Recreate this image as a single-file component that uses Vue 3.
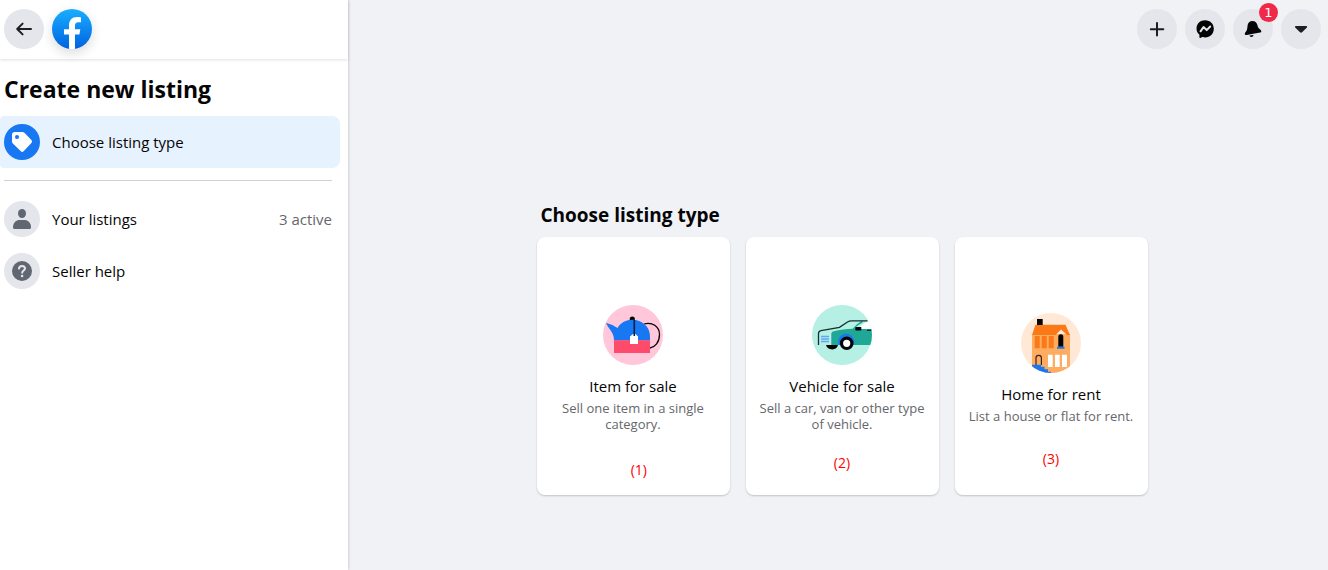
<script setup>
const listingTypes = [
  { id: 'item', title: 'Item for sale', text: 'Sell one item in a single category.', note: '(1)' },
  { id: 'vehicle', title: 'Vehicle for sale', text: 'Sell a car, van or other type of vehicle.', note: '(2)' },
  { id: 'home', title: 'Home for rent', text: 'List a house or flat for rent.', note: '(3)' }
]
</script>

<template>
  <div class="page">
    <aside class="sidebar">
      <header class="brand-bar">
        <button class="round" type="button" aria-label="Back">
          <svg width="20" height="20" viewBox="0 0 20 20" fill="none" stroke="#1c1e21" stroke-width="2" stroke-linecap="round" stroke-linejoin="round">
            <path d="M17 10H3.200M8.600 4.600 3.200 10l5.400 5.400" />
          </svg>
        </button>
        <a class="logo" href="#" aria-label="Facebook">
          <svg width="40" height="40" viewBox="0 0 40 40">
            <defs>
              <linearGradient id="brand" x1="0" y1="0" x2="0" y2="1">
                <stop offset="0" stop-color="#19aeff" />
                <stop offset="1" stop-color="#0062e0" />
              </linearGradient>
            </defs>
            <circle cx="20" cy="20" r="20" fill="url(#brand)" />
            <path fill="#fff" d="M17 39.800V25.600h-5v-5.400h5v-3.600C17 11 20 8 25 8c1.600 0 3.100.2 4 .4v4.800h-2.600c-2.500 0-3.400 1.300-3.400 3.400v3.600h5.300l-.9 5.400H23v14.200a20 20 0 0 1-6 0z" />
          </svg>
        </a>
      </header>

      <h1>Create new listing</h1>
      <nav class="menu">
        <a class="entry current" href="#" aria-current="page">
          <span class="badge blue">
            <svg width="20" height="20" viewBox="0 0 20 20">
              <path fill="#fff" fill-rule="evenodd" d="M2.600 0h7.800c.8 0 1.500.3 2 .8l7 7.300c.8.8.8 2 0 2.800l-7.800 8.400c-.8.8-2 .8-2.700 0L.8 11.600c-.5-.5-.8-1.200-.8-2V2.600C0 1.200 1.200 0 2.600 0zM5 3a2 2 0 1 0 0 4 2 2 0 0 0 0-4z" />
            </svg>
          </span>
          <span class="label">Choose listing type</span>
        </a>
        <hr />
        <a class="entry" href="#">
          <span class="badge">
            <svg width="20" height="22" viewBox="0 0 20 22" fill="#606770">
              <ellipse cx="10" cy="5.500" rx="4" ry="4.500" />
              <path d="M1 19.500C1 14.500 4 12 8 12h4c4 0 7 2.500 7 7.500 0 .9-.6 1.500-1.500 1.500h-15C1.600 21 1 20.400 1 19.500z" />
            </svg>
          </span>
          <span class="label">Your listings</span>
          <span class="count">3 active</span>
        </a>
        <a class="entry" href="#">
          <span class="badge">
            <svg width="20" height="20" viewBox="0 0 20 20">
              <circle cx="10" cy="10" r="10" fill="#606770" />
              <path d="M7 7.600C7.100 5.800 8.300 4.900 10 4.900s3 .9 3 2.500c0 2.100-2.800 2.200-2.800 4.300" fill="none" stroke="#e4e6eb" stroke-width="2" stroke-linecap="round" />
              <circle cx="10.100" cy="15" r="1.300" fill="#e4e6eb" />
            </svg>
          </span>
          <span class="label">Seller help</span>
        </a>
      </nav>
    </aside>

    <div class="content">
      <div class="actions">
        <button class="round" type="button" aria-label="Create">
          <svg width="20" height="20" viewBox="0 0 20 20" stroke="#1c1e21" stroke-width="2" stroke-linecap="round">
            <path d="M10 4v12.500M3.800 10.200h12.500" />
          </svg>
        </button>
        <button class="round" type="button" aria-label="Messenger">
          <svg width="20" height="20" viewBox="0 0 20 20">
            <path fill="#050505" d="M10.200 1.200c-4.900 0-8.700 3.500-8.700 8.300 0 2.500 1 4.600 2.700 6.100.2.200.2.300.2.600v2c0 .7.400.9 1 .7l1.800-.8c.2-.1.400-.1.600 0 .8.200 1.600.3 2.400.3 4.900 0 8.600-3.800 8.600-8.700 0-5-3.700-8.500-8.600-8.500z" />
            <path d="m5.500 12.300 3-4.200 3.200 3 3.500-3.600" fill="none" stroke="#e4e6eb" stroke-width="2" stroke-linejoin="round" stroke-linecap="round" />
          </svg>
        </button>
        <button class="round" type="button" aria-label="Notifications">
          <svg width="20" height="20" viewBox="0 0 20 20" fill="#050505">
            <path d="M4.500 7C4.800 3.800 6.800 2 9.400 2c2.600 0 4.300 1.300 4.900 3.800.4 1.700.8 2.900 2 4 1.200 1 2 1.700 2 2.600 0 .6-.5.900-1.200 1L3.700 16c-1 .2-1.900-.2-1.900-1 0-.9.700-1.600 1.500-2.900C4.300 10.500 4.300 9 4.500 7z" />
            <path d="m6.500 16.500 4-.6c0 1-.7 1.900-1.900 2-1 .2-1.900-.4-2.100-1.400z" />
          </svg>
          <span class="alert">1</span>
        </button>
        <button class="round" type="button" aria-label="Account">
          <svg width="20" height="20" viewBox="0 0 20 20" fill="#1c1e21">
            <path d="M4.800 7h10.500c.8 0 1.100.9.600 1.400l-4.800 4.900c-.6.600-1.500.6-2.100 0L4.200 8.400C3.700 7.900 4 7 4.800 7z" />
          </svg>
        </button>
      </div>

      <main class="chooser">
        <h2>Choose listing type</h2>
        <div class="cards">
          <button v-for="type in listingTypes" :key="type.id" class="card" :class="type.id" type="button">
            <svg v-if="type.id === 'item'" width="60" height="60" viewBox="0 0 60 60">
              <circle cx="30" cy="30" r="30" fill="#ffc7d9" />
              <path d="M41 19c8-2.500 15.500 2.500 15.500 10.500S52 42 47 43" fill="none" stroke="#050505" stroke-width="1.300" />
              <circle cx="29.300" cy="14" r="2.600" fill="#050505" />
              <path fill="#1877f2" d="M3 18c3 .3 8.500 3 11.500 5C18 17.500 23 14.800 29.300 14.800 39 14.800 47 22 47 31v4.500H11C11 27 6.500 25.500 3 18z" />
              <path fill="#ff4b6b" d="M11 35.300h36V48H11z" />
              <path fill="#fff" d="m30 29-3 2.500V39h8v-7.500L32.500 29z" />
              <path d="M31.300 15v16" stroke="#0b1f45" stroke-width="1.600" />
            </svg>
            <svg v-else-if="type.id === 'vehicle'" width="60" height="60" viewBox="0 0 60 60">
              <clipPath id="vehicle-clip"><circle cx="30" cy="30" r="30" /></clipPath>
              <circle cx="30" cy="30" r="30" fill="#b6efe4" />
              <g clip-path="url(#vehicle-clip)">
                <path fill="#fff" d="M46 25c2-4 5-6.500 9-8.200h5V25z" />
                <path fill="#20a896" d="M19.300 29c0-1.600 1-2.300 2.500-2.700 6-1.600 12-2.600 19-2.600L49 24h11v16H19.300z" />
                <path d="M41 24.500c2.500-3.500 5.500-6 9.500-8" fill="none" stroke="#20a896" stroke-width="1.400" />
                <path d="M6.500 40V28.500c0-1.700 1-2.500 2.500-2.800l18.500-3.400 8-5.300c1.500-1 2.500-1.200 4-1.200h16" fill="none" stroke="#12312e" stroke-width="1.300" />
                <path d="M9 31.500h8M9 34h8M9 36.500h8" stroke="#5fa8f5" stroke-width="1.500" />
                <path fill="#050505" d="M14 40h12c-.6 2.700-2.500 4.400-5.800 4.400S14.600 42.700 14 40zM43.500 22h5.800v3.600h-4.600c-1.400 0-1.900-.9-1.200-3.600zM55 24.800h4.500v1H55z" />
                <path fill="#1877f2" d="M26.500 40a8.200 8.200 0 1 1 15.800-3l-.5 3z" />
                <circle cx="34.700" cy="38.300" r="5.200" fill="#fff" stroke="#050505" stroke-width="3.200" />
              </g>
            </svg>
            <svg v-else width="60" height="60" viewBox="0 0 60 60">
              <clipPath id="home-clip"><circle cx="30" cy="30" r="30" /></clipPath>
              <circle cx="30" cy="30" r="30" fill="#ffe9d6" />
              <g clip-path="url(#home-clip)">
                <path fill="#ffac63" d="M11 21h38v39H11z" />
                <path fill="#fa7816" d="M14.500 11.700h30L49 22h-3l-6-5.500-5.500 5.500H11z" />
                <path fill="#050505" d="M16 6h5.700v6H16zM37.300 33.700v-10a2.500 2.500 0 0 1 5 0v10z" />
                <path fill="#fa7816" d="M13.700 23h5v12.300h-5zM20.700 23h5v12.300h-5zM27.700 23h5v12.300h-5z" />
                <path fill="#1877f2" d="M36 33.700h7.500v2H36z" />
                <path fill="#fff" d="M27 41.700h4.700V54H27zM34 41.700h4.700V54H34zM41 41.700h5V54h-5z" />
                <path d="M15 52v-7a2.700 2.700 0 0 1 5.400 0v7" fill="none" stroke="#3b2417" stroke-width="1.200" />
                <path fill="#1877f2" d="M11 51.700h9v2h3.500v2.600H27v2.400h3V61H11z" />
              </g>
            </svg>
            <span class="title">{{ type.title }}</span>
            <span class="text">{{ type.text }}</span>
            <span class="note">{{ type.note }}</span>
          </button>
        </div>
      </main>
    </div>
  </div>
</template>

<style>
body {
  margin: 0;
}
</style>

<style scoped>
.page {
  display: flex;
  min-height: 100vh;
  background: #f0f2f6;
  color: #050505;
  font-family: "Open Sans", "Noto Sans", sans-serif;
}
.page * {
  box-sizing: border-box;
}
.sidebar {
  flex: 0 0 348px;
  background: #fff;
  box-shadow: 0 0 3px rgba(0, 0, 0, 0.25);
}
.brand-bar {
  display: flex;
  gap: 8px;
  height: 59px;
  padding: 9px 4px;
  box-shadow: 0 1px 3px rgba(0, 0, 0, 0.12);
}
.round {
  position: relative;
  display: flex;
  align-items: center;
  justify-content: center;
  width: 40px;
  height: 40px;
  padding: 0;
  border: 0;
  border-radius: 50%;
  background: #e4e6eb;
  cursor: pointer;
}
.logo {
  height: 40px;
  border-radius: 50%;
  box-shadow: 0 4px 12px rgba(0, 0, 0, 0.15);
}
.logo svg {
  display: block;
}
h1 {
  margin: 14px 4px 11px;
  font-size: 23px;
  line-height: 32px;
  font-weight: 700;
}
.entry {
  display: flex;
  align-items: center;
  gap: 12px;
  height: 52px;
  margin-right: 8px;
  padding: 0 8px 0 4px;
  border-radius: 4px 8px 8px 4px;
  color: inherit;
  font-size: 15px;
  line-height: 20px;
  text-decoration: none;
}
.current {
  background: #e7f2ff;
}
.badge {
  display: flex;
  align-items: center;
  justify-content: center;
  width: 36px;
  height: 36px;
  border-radius: 50%;
  background: #e4e6eb;
}
.blue {
  background: #1877f2;
}
.label {
  flex: 1;
}
.count {
  color: #65676b;
}
hr {
  height: 1px;
  margin: 12px 16px 12px 4px;
  border: 0;
  background: #ced0d4;
}
.content {
  flex: 1;
  min-width: 0;
}
.actions {
  display: flex;
  justify-content: flex-end;
  gap: 8px;
  padding: 9px 7px;
}
.alert {
  position: absolute;
  top: -6px;
  right: -5px;
  width: 19px;
  height: 19px;
  border-radius: 50%;
  background: #f02849;
  color: #fff;
  font: 13px/19px "DejaVu Sans", sans-serif;
  text-align: center;
}
.chooser {
  width: fit-content;
  margin: 0 auto;
  padding: 144px 0 24px 8px;
}
h2 {
  margin: 0 4px 9px;
  font-size: 19px;
  line-height: 26px;
  font-weight: 700;
}
.cards {
  display: grid;
  grid-template-columns: repeat(3, 193px);
  gap: 16px;
}
.card {
  position: relative;
  display: flex;
  flex-direction: column;
  align-items: center;
  justify-content: center;
  min-height: 258px;
  padding: 16px 12px 12px;
  border: 0;
  border-radius: 8px;
  background: #fff;
  box-shadow: 0 1px 2px rgba(0, 0, 0, 0.2);
  color: inherit;
  font-family: inherit;
  cursor: pointer;
}
.title {
  margin: 11px 0 4px;
  font-size: 15px;
  line-height: 20px;
}
.text {
  color: #65676b;
  font-size: 13px;
  line-height: 16px;
}
.note {
  position: absolute;
  bottom: 16px;
  left: 50%;
  color: #f00;
  font-size: 14px;
  line-height: 18px;
  transform: translateX(-50%);
}
.item .note {
  left: 53%;
}
.vehicle .note {
  bottom: 23px;
}
.home .note {
  bottom: 27px;
}
</style>
